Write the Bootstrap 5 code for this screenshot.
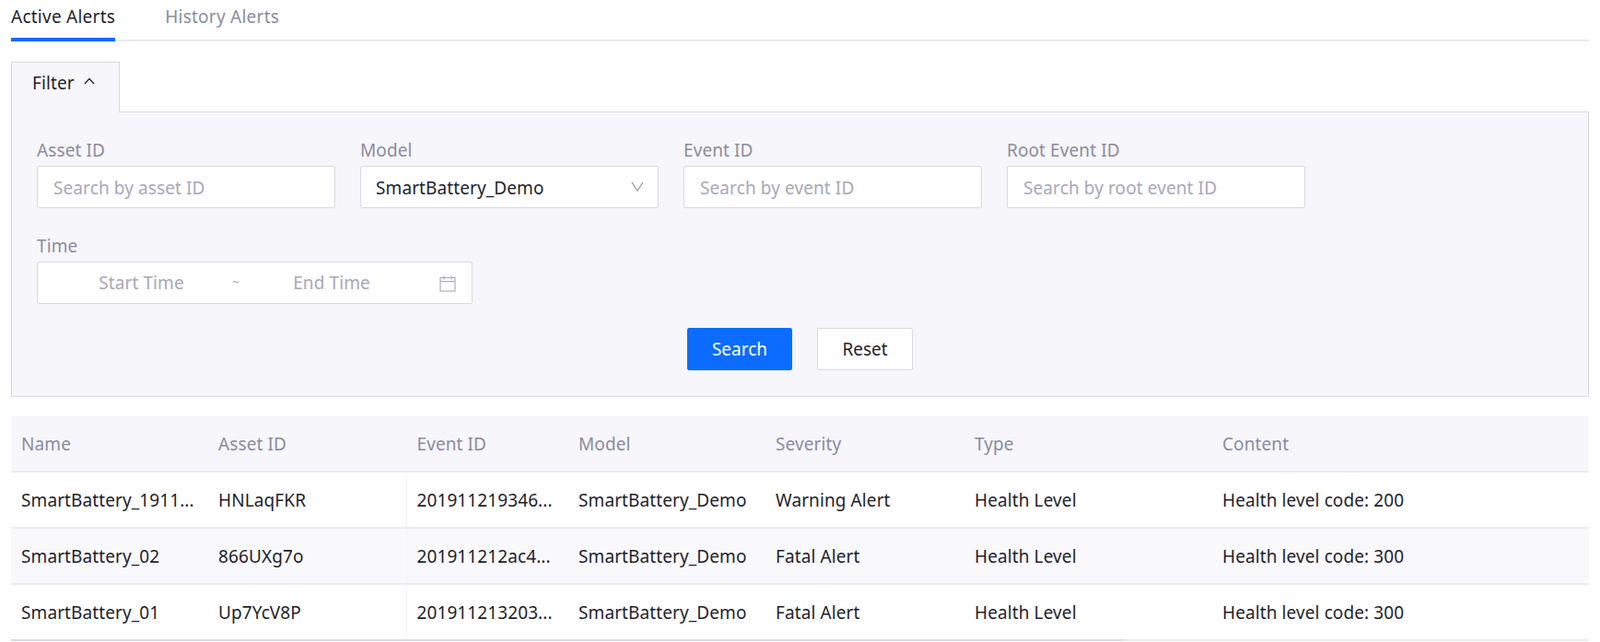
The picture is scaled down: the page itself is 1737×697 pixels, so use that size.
<!DOCTYPE html>
<html lang="en">

<head>
  <meta charset="UTF-8" />
  <meta name="viewport" content="width=device-width, initial-scale=1.0" />
  <title>Alerts</title>
  <link href="https://cdn.jsdelivr.net/npm/bootstrap@5.3.0/dist/css/bootstrap.min.css" rel="stylesheet" />

  <style>
    body {
      font-family: "Noto Sans", "Liberation Sans", sans-serif;
      font-size: 19px;
      letter-spacing: .1px;
      color: #1f1f2b;
      background: #fff;
      overflow: hidden;
    }

    .page-wrap {
      padding: 0 12px;
    }

    .alert-tabs {
      height: 45px;
      gap: 54px;
      border-bottom: 2px solid #e9e9f0;
    }

    .alert-tabs .nav-link {
      height: 45px;
      padding: 0;
      line-height: 37px;
      font-size: 19px;
      letter-spacing: .25px;
      color: #8c8c9c;
      border: 0;
      border-radius: 0;
    }

    .alert-tabs .nav-link.active {
      color: #1f1f2b;
      border-bottom: 4px solid #0b6cff;
    }

    .filter-tab {
      width: 118px;
      height: 55px;
      margin-top: 22px;
      margin-bottom: -1px;
      padding-left: 22px;
      line-height: 45px;
      background: #f6f6fb;
      border: 1px solid #d9d9e3;
      border-bottom: 0;
      position: relative;
      gap: 10px;
    }

    .filter-panel {
      height: 310px;
      padding: 28px 27px 0;
      background: #f6f6fb;
      border: 1px solid #d9d9e3;
    }

    .filter-row {
      gap: 27px;
      margin-bottom: 28px;
    }

    .field-box {
      width: 324px;
    }

    .field-box.time-box {
      width: 473px;
    }

    .field-label {
      display: block;
      height: 30px;
      margin: 0;
      line-height: 26px;
      color: #8c8c9c;
    }

    .filter-panel .form-control,
    .filter-panel .form-select {
      height: 46px;
      padding: 2px 16px 0;
      font-size: 19px;
      letter-spacing: .1px;
      color: #1f1f2b;
      border: 1px solid #d9d9e3;
      border-radius: 2px;
    }

    .filter-panel .form-control {
      padding-left: 17px;
    }

    .filter-panel .form-select {
      background-image: none;
    }

    .select-wrap svg {
      position: absolute;
      right: 16px;
      top: 17px;
      pointer-events: none;
    }

    .filter-panel .form-control::placeholder {
      color: #a8a8b8;
      opacity: 1;
    }

    .time-range {
      height: 46px;
      padding-top: 1px;
      padding-right: 17px;
      background: #fff;
      border: 1px solid #d9d9e3;
      border-radius: 2px;
      color: #a8a8b8;
    }

    .time-start {
      width: 207px;
      padding-left: 18px;
      text-align: center;
    }

    .time-sep {
      width: 16px;
      font-size: 14px;
      text-align: center;
      margin-top: -4px;
    }

    .time-end {
      width: 192px;
      text-align: center;
    }

    .btn-row {
      gap: 27px;
      margin-top: 26px;
    }

    .btn-row .btn {
      height: 46px;
      font-size: 19px;
      padding: 1px 0 0;
      border-radius: 2px;
    }

    .btn-search {
      width: 114px;
      background: #0b6cff;
      border-color: #0b6cff;
      color: #fff;
    }

    .btn-reset {
      width: 104px;
      background: #fff;
      border-color: #d9d9e3;
      color: #1f1f2b;
    }

    .alert-table {
      margin: 21px 0 0;
      table-layout: fixed;
      width: 100%;
    }

    .alert-table th,
    .alert-table td {
      height: 61px;
      padding: 2px 11px 0;
      vertical-align: middle;
      white-space: nowrap;
      overflow: hidden;
      border-bottom: 2px solid #ececf2;
      color: #1f1f2b;
      background: #fff;
    }

    .alert-table th {
      height: 60px;
      font-weight: 400;
      color: #8c8c9c;
      background: #f6f6fb;
    }

    .alert-table tr.row-alt td {
      background: #f9f9fc;
    }

    .alert-table .fixed-edge {
      border-right: 1px solid #f5f5f9;
    }

    /* horizontal scroll thumb sitting on the table's last line */
    .scroll-thumb {
      width: 1208px;
      height: 2px;
      margin-top: -2px;
      background: #d9d9e3;
      position: relative;
    }
  </style>
</head>

<body>
  <div class="page-wrap">
    <ul class="nav alert-tabs">
      <li class="nav-item"><a class="nav-link active" href="#">Active Alerts</a></li>
      <li class="nav-item"><a class="nav-link" href="#">History Alerts</a></li>
    </ul>

    <!-- Filter -->
    <div class="filter-tab d-flex align-items-start">
      <span>Filter</span>
      <svg width="12" height="8" viewBox="0 0 12 8" fill="none" stroke="#1f1f2b" stroke-width="1.2" class="mt-3">
        <path d="M1 7 6 1.5 11 7" />
      </svg>
    </div>
    <form class="filter-panel">
      <div class="d-flex filter-row">
        <div class="field-box">
          <label class="field-label">Asset ID</label>
          <input type="text" class="form-control" placeholder="Search by asset ID" />
        </div>
        <div class="field-box">
          <label class="field-label">Model</label>
          <div class="select-wrap position-relative">
            <select class="form-select">
              <option>SmartBattery_Demo</option>
            </select>
            <svg width="14" height="11" viewBox="0 0 14 11" fill="none" stroke="#8c8c9c" stroke-width="1.1">
              <path d="M1 1 7 10 13 1" />
            </svg>
          </div>
        </div>
        <div class="field-box">
          <label class="field-label">Event ID</label>
          <input type="text" class="form-control" placeholder="Search by event ID" />
        </div>
        <div class="field-box">
          <label class="field-label">Root Event ID</label>
          <input type="text" class="form-control" placeholder="Search by root event ID" />
        </div>
      </div>
      <div class="field-box time-box">
        <label class="field-label">Time</label>
        <div class="time-range d-flex align-items-center">
          <span class="time-start">Start Time</span>
          <span class="time-sep">~</span>
          <span class="time-end">End Time</span>
          <svg class="ms-auto" width="18" height="18" viewBox="0 0 18 18" fill="none" stroke="#a8a8b8" stroke-width="1.1">
            <rect x="1" y="2.5" width="16" height="14.5" />
            <path d="M1 6.5H17M5 0.5V4.5M13 0.5V4.5" />
          </svg>
        </div>
      </div>
      <div class="d-flex justify-content-center btn-row">
        <button type="button" class="btn btn-search">Search</button>
        <button type="button" class="btn btn-reset">Reset</button>
      </div>
    </form>

    <!-- Alert table -->
    <table class="alert-table">
      <colgroup>
        <col style="width: 214px" />
        <col style="width: 215px" />
        <col style="width: 176px" />
        <col style="width: 214px" />
        <col style="width: 216px" />
        <col style="width: 269px" />
        <col />
      </colgroup>
      <thead>
        <tr>
          <th>Name</th>
          <th class="fixed-edge">Asset ID</th>
          <th>Event ID</th>
          <th>Model</th>
          <th>Severity</th>
          <th>Type</th>
          <th>Content</th>
        </tr>
      </thead>
      <tbody>
        <tr>
          <td>SmartBattery_1911...</td>
          <td class="fixed-edge">HNLaqFKR</td>
          <td>201911219346...</td>
          <td>SmartBattery_Demo</td>
          <td>Warning Alert</td>
          <td>Health Level</td>
          <td>Health level code: 200</td>
        </tr>
        <tr class="row-alt">
          <td>SmartBattery_02</td>
          <td class="fixed-edge">866UXg7o</td>
          <td>201911212ac4...</td>
          <td>SmartBattery_Demo</td>
          <td>Fatal Alert</td>
          <td>Health Level</td>
          <td>Health level code: 300</td>
        </tr>
        <tr>
          <td>SmartBattery_01</td>
          <td class="fixed-edge">Up7YcV8P</td>
          <td>201911213203...</td>
          <td>SmartBattery_Demo</td>
          <td>Fatal Alert</td>
          <td>Health Level</td>
          <td>Health level code: 300</td>
        </tr>
      </tbody>
    </table>
    <div class="scroll-thumb"></div>
  </div>

  <script src="https://cdn.jsdelivr.net/npm/bootstrap@5.3.0/dist/js/bootstrap.bundle.min.js"></script>
</body>

</html>
